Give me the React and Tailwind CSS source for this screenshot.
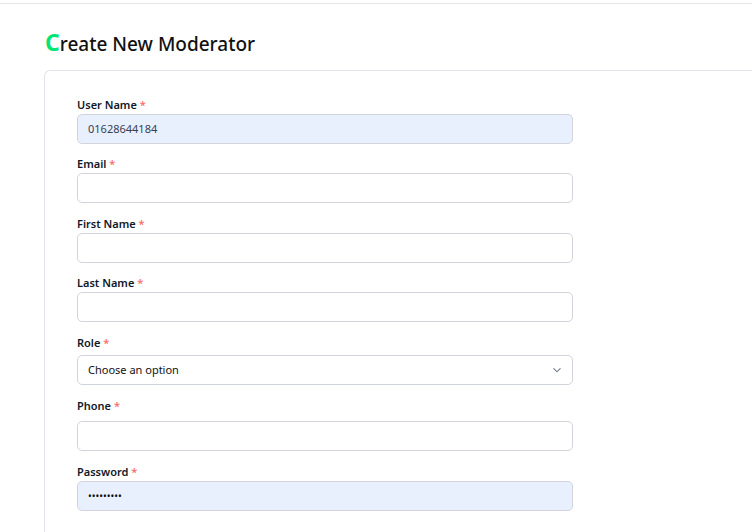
import React from "react";

function Label({ children }) {
  return (
    <label className="block text-[11px] font-semibold leading-[14px] text-[#111827]">
      {children} <span className="text-[#f87171]">*</span>
    </label>
  );
}

function Input({ value = "", filled = false, type = "text" }) {
  return (
    <div
      className={`h-[30px] w-[496px] rounded-[5px] border border-[#d1d5db] px-[10px] flex items-center ${
        filled ? "bg-[#e8f0fe]" : "bg-white"
      } ${type === "password" ? "text-[#111] text-[10px]" : "text-[#374151] text-[11px]"}`}
    >
      {value}
    </div>
  );
}

export default function App() {
  return (
    <div className="h-[532px] w-[752px] overflow-hidden bg-white" style={{ fontFamily: '"Noto Sans", "Open Sans", sans-serif' }}>
      <div className="h-[4px] border-b border-[#e5e5e5] bg-white" />
      <div className="pl-[44px] pt-[24px]">
        <h1 className="ml-[1px] text-[19px] font-medium leading-[28px] text-[#111]">
          <span className="text-[23px] font-bold text-[#00e676]">C</span>reate New Moderator
        </h1>
        <div className="mt-[12px] h-[500px] rounded-tl-[6px] border-l border-t border-[#e2e2ea] pl-[32px] pt-[27px]">
          <div className="flex flex-col">
            <Label>User Name</Label>
            <div className="mt-[2px]"><Input value="01628644184" filled /></div>

            <div className="mt-[13px]"><Label>Email</Label></div>
            <div className="mt-[2px]"><Input /></div>

            <div className="mt-[14px]"><Label>First Name</Label></div>
            <div className="mt-[2px]"><Input /></div>

            <div className="mt-[13px]"><Label>Last Name</Label></div>
            <div className="mt-[2px]"><Input /></div>

            <div className="mt-[14px]"><Label>Role</Label></div>
            <div className="mt-[5px]">
              <div className="flex h-[30px] w-[496px] items-center justify-between rounded-[5px] border border-[#d1d5db] bg-white pl-[10px] pr-[8px] text-[11px] text-[#111]">
                <span>Choose an option</span>
                <svg width="14" height="14" viewBox="0 0 20 20" fill="none">
                  <path d="M5.5 8l4.5 4.5L14.5 8" stroke="#6b7280" strokeWidth="1.5" strokeLinecap="round" strokeLinejoin="round" />
                </svg>
              </div>
            </div>

            <div className="mt-[14px]"><Label>Phone</Label></div>
            <div className="mt-[8px]"><Input /></div>

            <div className="mt-[14px]"><Label>Password</Label></div>
            <div className="mt-[2px]"><Input value="•••••••••" filled type="password" /></div>
          </div>
        </div>
      </div>
    </div>
  );
}
